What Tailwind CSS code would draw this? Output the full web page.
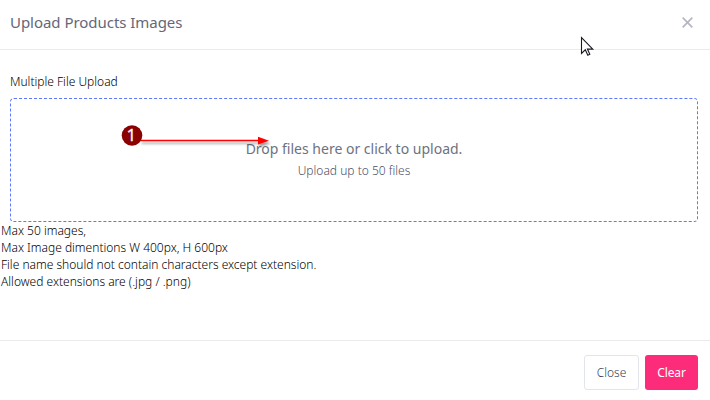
<!DOCTYPE html>
<html lang="en">
<head>
<meta charset="utf-8">
<title>Upload Products Images</title>
<script src="https://cdn.jsdelivr.net/npm/@tailwindcss/browser@4"></script>
</head>
<body class="bg-white font-['Noto_Sans',sans-serif] font-light overflow-hidden">
<div class="relative flex flex-col w-[710px] h-[400px]">
  <header class="flex items-center justify-between h-[50px] pl-[10px] pr-[17px] pb-[4px] border-b border-[#ebebeb]">
    <h1 class="text-[15px] leading-[20px] pb-[2px] font-normal tracking-[-0.04px] text-[#646779]">Upload Products Images</h1>
    <button aria-label="Close dialog"><svg class="block" width="11" height="11" viewBox="0 0 11 11" fill="none" stroke="#b5b6c3" stroke-width="1.7"><path d="M.7.7l9.6 9.6M10.3.7L.7 10.3"/></svg></button>
  </header>
  <main class="flex-1 text-[12px] leading-[17px] text-black">
    <p class="pl-[10px] pt-[23px] mb-[8px]">Multiple File Upload</p>
    <div class="ml-[10px] w-[688px] h-[124px] border border-dashed border-[#5d78ff] rounded-[4px] flex flex-col items-center pt-[40px]">
      <h3 class="text-[14px] leading-[20px] font-normal text-[#6c7280]">Drop files here or click to upload.</h3>
      <span class="mt-[3px] text-[#4c5068]">Upload up to 50 files</span>
    </div>
    <p class="pl-px">Max 50 images,<br>Max Image dimentions W 400px, H 600px<br>File name should not contain characters except extension.<br>Allowed extensions are (.jpg / .png)</p>
  </main>
  <footer class="h-[60px] border-t border-[#ebebeb] flex justify-end gap-[6px] pt-[14px] pr-[12px] text-[12px]">
    <button class="w-[55px] h-[35px] rounded-[3px] border border-[#e2e5ec] text-[#3c4052]">Close</button>
    <button class="w-[53px] h-[35px] rounded-[3px] bg-[#fd2c7b] text-white font-normal tracking-[-0.15px]">Clear</button>
  </footer>
  <svg class="absolute left-[115px] top-[120px]" width="160" height="35" viewBox="115 120 160 35">
    <defs><filter id="s" x="-10%" y="-100%" width="120%" height="400%"><feDropShadow dx="1.5" dy="2.5" stdDeviation="1" flood-color="#000" flood-opacity=".4"/></filter></defs>
    <g filter="url(#s)"><path d="M140 139.8h119v1.5H140z" fill="#f00"/><path d="M258 136.7l11 4-11 3.7z" fill="#f00"/></g>
    <circle cx="132" cy="135.5" r="10.3" fill="#8b0000"/>
    <text x="131.3" y="141.3" text-anchor="middle" fill="#fff" stroke="#fff" stroke-width=".3" font-size="17" font-weight="400" font-family="Open Sans, sans-serif">1</text>
  </svg>
  <svg class="absolute left-[580px] top-[36px]" width="16" height="22" viewBox="0 0 16 22"><path d="M1.5 1.5v16l3.8-3.7 2.5 5.4 2-1-2.4-5.1h5.4z" fill="#fff" stroke="#191923" stroke-width="1.1"/></svg>
</div>
</body>
</html>
